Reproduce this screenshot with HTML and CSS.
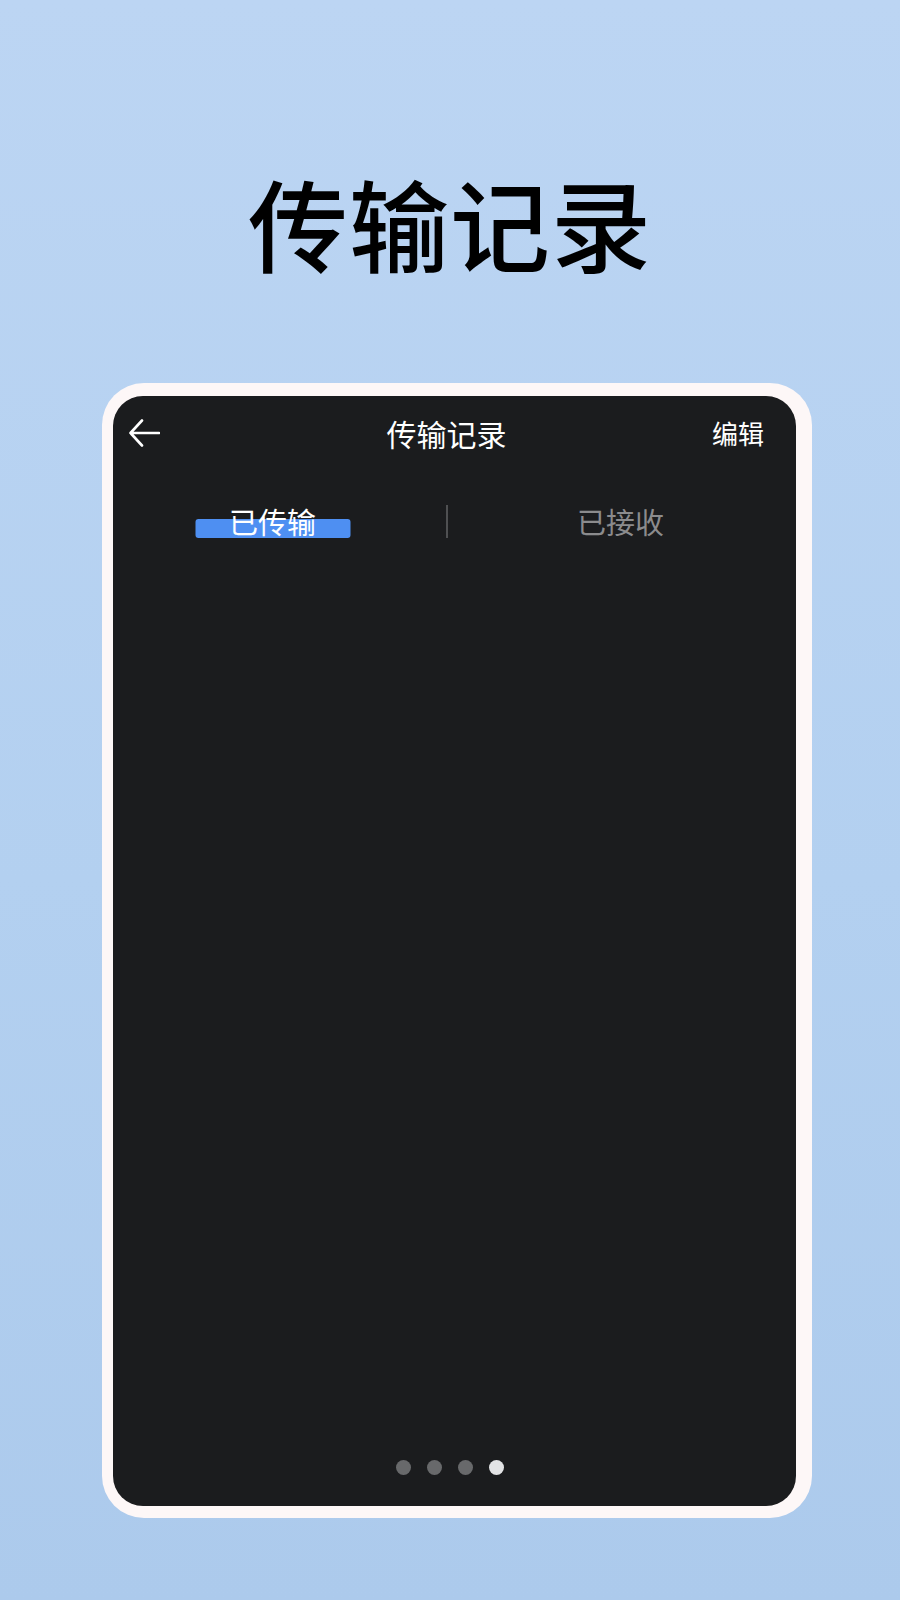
FILE: index.html
```html
<!DOCTYPE html>
<html lang="zh-CN">
<head>
<meta charset="utf-8">
<title>传输记录</title>
<link rel="stylesheet" href="styles.css">
</head>
<body>
<main class="page">
  <h1 class="hero-title">传输记录</h1>
  <section class="device">
    <div class="screen">
      <header class="nav">
        <span class="nav-back">
          <svg width="31" height="28" viewBox="0 0 31 28" fill="none" stroke="#ffffff" stroke-width="2.6" stroke-linecap="round" stroke-linejoin="round">
            <path d="M13 1.5 L1.5 14 L13 26.5 M1.5 14 H30"/>
          </svg>
        </span>
        <span class="nav-title">传输记录</span>
        <span class="nav-action">编辑</span>
      </header>
      <div class="tabs">
        <div class="tab tab-active"><span class="tab-bar"></span><span class="tab-label">已传输</span></div>
        <div class="tab-divider"></div>
        <div class="tab"><span class="tab-label">已接收</span></div>
      </div>
      <div class="dots">
        <span class="dot"></span>
        <span class="dot"></span>
        <span class="dot"></span>
        <span class="dot dot-active"></span>
      </div>
    </div>
  </section>
</main>
</body>
</html>
```

FILE: styles.css
```css
html, body {
  margin: 0;
  padding: 0;
}
body {
  width: 900px;
  height: 1600px;
  background: linear-gradient(180deg, #bcd5f3 0%, #b3d0f0 55%, #accaec 100%);
  font-family: "Noto Sans CJK SC", "Noto Sans", sans-serif;
  overflow: hidden;
}
.page {
  display: flex;
  flex-direction: column;
  height: 1600px;
}
.hero-title {
  margin: 0;
  padding-top: 172px;
  height: 100px;
  line-height: 100px;
  font-size: 100px;
  font-weight: 500;
  color: #000000;
  text-align: center;
  letter-spacing: 1px;
}
.device {
  margin: 111px 0 0 102px;
  width: 710px;
  box-sizing: border-box;
  padding: 13px 16px 12px 11px;
  background: #fdf7f7;
  border-radius: 42px;
}
.screen {
  height: 1110px;
  background: #1b1c1e;
  border-radius: 30px;
  display: flex;
  flex-direction: column;
}
.nav {
  height: 74px;
  padding: 0 32px 0 16px;
  display: grid;
  grid-template-columns: 1fr auto 1fr;
  align-items: center;
}
.nav-back {
  display: flex;
  align-items: center;
  justify-self: start;
}
.nav-title {
  color: #ffffff;
  font-size: 30px;
  font-weight: 400;
  line-height: 1;
}
.nav-action {
  justify-self: end;
  color: #ffffff;
  font-size: 26px;
  font-weight: 400;
  line-height: 1;
}
.tabs {
  margin-top: 21px;
  height: 60px;
  padding: 0 32px 0 16px;
  display: flex;
  align-items: center;
  justify-content: center;
  gap: 73px;
}
.tab {
  position: relative;
  width: 200px;
  height: 60px;
  display: flex;
  align-items: center;
  justify-content: center;
}
.tab-label {
  position: relative;
  font-size: 29px;
  font-weight: 400;
  line-height: 1;
  color: #8b8b8d;
}
.tab-active .tab-label {
  color: #ffffff;
}
.tab-bar {
  position: absolute;
  left: 50%;
  top: 28px;
  width: 155px;
  height: 19px;
  transform: translateX(-50%);
  background: #4e8ff2;
  border-radius: 3px;
}
.tab-divider {
  width: 2px;
  height: 33px;
  background: #4f5052;
}
.dots {
  margin-top: auto;
  margin-bottom: 31px;
  padding: 0 25px 0 16px;
  display: flex;
  justify-content: center;
  gap: 16px;
}
.dot {
  width: 15px;
  height: 15px;
  border-radius: 50%;
  background: #68696b;
}
.dot-active {
  background: #e2e3e5;
}
```
